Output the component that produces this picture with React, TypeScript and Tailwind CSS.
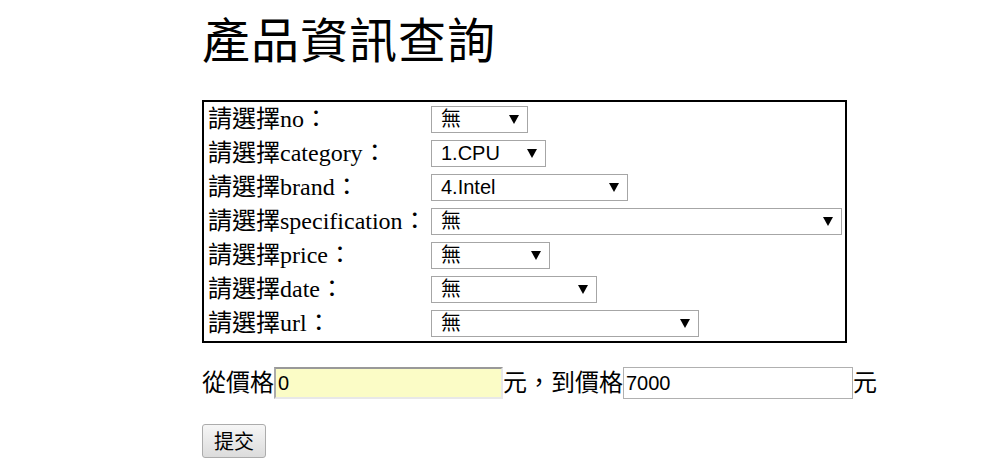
import { useState } from "react";

const fields = [
  { key: "no", value: "無", width: "w-[97px]" },
  { key: "category", value: "1.CPU", width: "w-[115px]" },
  { key: "brand", value: "4.Intel", width: "w-[197px]" },
  { key: "specification", value: "無", width: "w-[411px]" },
  { key: "price", value: "無", width: "w-[119px]" },
  { key: "date", value: "無", width: "w-[166px]" },
  { key: "url", value: "無", width: "w-[268px]" },
];

function FakeSelect({ value, width }: { value: string; width: string }) {
  return (
    <div
      className={`${width} h-[27px] flex items-center justify-between border border-[#a6a6a6] bg-white pl-[9px] pr-[8px] font-['Liberation_Sans','Noto_Sans_CJK_TC',sans-serif] text-[20px] leading-none`}
    >
      <span>{value}</span>
      <svg width="10" height="10" viewBox="0 0 10 10">
        <polygon points="0,1 10,1 5,10" fill="#000" />
      </svg>
    </div>
  );
}

export default function App() {
  const [from, setFrom] = useState("0");
  const [to, setTo] = useState("7000");

  return (
    <div className="min-h-[476px] bg-white pl-[202px] text-black font-['Liberation_Serif','Noto_Sans_CJK_TC',serif]">
      <h1 className="pt-[14px] text-[48px] leading-[56px] tracking-[1px] font-normal">產品資訊查詢</h1>

      <div className="mt-[30px] w-[645px] border-2 border-black pb-px">
        {fields.map((f) => (
          <div key={f.key} className="flex h-[34px] items-center">
            <span className="w-[227px] pl-[4px] text-[24px] leading-[30px]">
              請選擇{f.key}：
            </span>
            <FakeSelect value={f.value} width={f.width} />
          </div>
        ))}
      </div>

      <form className="mt-[24px]" onSubmit={(e) => e.preventDefault()}>
        <div className="flex h-[32px] items-center text-[24px] leading-[32px]">
          <span>從價格</span>
          <input
            value={from}
            onChange={(e) => setFrom(e.target.value)}
            className="h-[32px] w-[229px] border-2 border-t-[#999] border-l-[#aaa] border-b-[#e8e8e8] border-r-[#e8e8e8] bg-[#fbfcc6] px-[2px] font-['Liberation_Sans',sans-serif] text-[20px] outline-none"
          />
          <span>元，到價格</span>
          <input
            value={to}
            onChange={(e) => setTo(e.target.value)}
            className="h-[32px] w-[230px] border border-[#b0b0b0] bg-white px-[2px] font-['Liberation_Sans',sans-serif] text-[20px] outline-none"
          />
          <span>元</span>
        </div>

        <button
          type="submit"
          className="mt-[25px] h-[34px] w-[64px] rounded-[3px] border border-[#acacac] bg-gradient-to-b from-[#f6f6f6] to-[#dcdcdc] text-[20px] leading-none font-['Noto_Sans_CJK_TC',sans-serif]"
        >
          提交
        </button>
      </form>
    </div>
  );
}
